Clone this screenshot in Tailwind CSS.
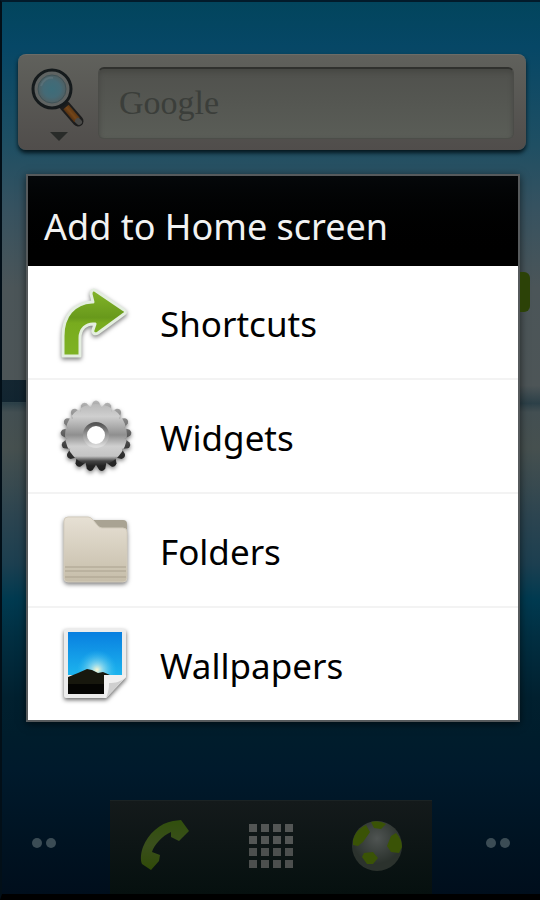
<!DOCTYPE html>
<html lang="en">
<head>
    <meta charset="UTF-8">
    <meta name="viewport" content="width=device-width, initial-scale=1.0">
    <title>Home</title>
    <script src="https://cdn.jsdelivr.net/npm/@tailwindcss/browser@4"></script>
</head>
<body class="bg-black font-['Noto_Sans',sans-serif]">
    <div class="min-h-screen flex flex-col justify-between border-t-2 border-l-2 border-b-6 border-t-[#021b2b] border-l-[#020f18] border-b-black bg-[linear-gradient(90deg,#0f222eee_0%,#0f222eee_8%,transparent_50%),linear-gradient(180deg,#02455d_0%,#064766_5%,#1f4f63_16%,#365260_23%,#4b5558_32%,#4d5557_43%,#2c4048_45%,#434f52_46%,#46504f_50%,#2b4450_58%,#1c3f50_63%,#003a50_67%,#012f42_71%,#01202f_78%,#001d2c_82%,#001a2c_86%,#001322_94%,#000e1c_100%)] bg-[length:100%_22px,100%_100%] bg-[position:0_378px,0_0] bg-no-repeat">

        <main class="flex flex-col">
            <!-- Search widget -->
            <form class="ml-4 mr-3.5 mt-13 h-24 flex items-center rounded-lg px-3 bg-linear-to-b from-[#60615c] to-[#504d4b] border-t border-[#6c6c67] shadow-[0_3px_4px_#04151c]">
                <button type="button" aria-label="Search options" class="w-14 shrink-0">
                    <svg class="w-14 h-20" viewBox="0 0 56 80" fill="none">
                        <defs>
                            <radialGradient id="lens"><stop offset="0" stop-color="#3c6d7a"/><stop offset=".6" stop-color="#446a76"/><stop offset="1" stop-color="#505f62"/></radialGradient>
                            <linearGradient id="handle" x1="0" y1="1" x2="1" y2="0"><stop offset="0" stop-color="#2a1608"/><stop offset=".5" stop-color="#74461a"/><stop offset="1" stop-color="#3c2209"/></linearGradient>
                        </defs>
                        <path d="M35 43l13 15" stroke="#1d1d1d" stroke-width="11" stroke-linecap="round"/>
                        <path d="M36 44l11 13" stroke="url(#handle)" stroke-width="7"/>
                        <path d="M48 58l1 1" stroke="#4a4a48" stroke-width="6" stroke-linecap="round"/>
                        <circle cx="22" cy="26" r="19" fill="#5f6362" stroke="#151a1c" stroke-width="3"/>
                        <circle cx="22" cy="26" r="14" fill="url(#lens)" stroke="#3f5257" stroke-width="1"/>
                        <path d="M11 23c2-6 7-9 12-8" stroke="#587078" stroke-width="2"/>
                        <path d="M20 69h18l-9 9z" fill="#292b29"/>
                    </svg>
                </button>
                <input type="text" aria-label="Google search" placeholder="Google" class="ml-3 min-w-0 flex-1 h-18 rounded-md px-5 text-[34px] font-['Liberation_Serif',serif] placeholder:text-[#3b3e3a] bg-linear-to-b from-[#50514d] to-[#5a5d57] border border-t-2 border-[#4b4c48] border-t-[#30312e] border-b-[#4c4e49] shadow-[inset_0_3px_5px_#464743]">
            </form>

            <!-- Dialog -->
            <section role="dialog" aria-labelledby="dialog-title" class="relative ml-6 mr-5 mt-6 border-2 border-[#565a5c] bg-white shadow-[0_2px_8px_#00000099]">
                <h1 id="dialog-title" class="h-[90px] pl-4 pt-3 flex items-center bg-linear-to-b from-[#05080a] to-black text-[36px] text-[#f2f2f2]">Add to Home screen</h1>
                <ul class="divide-y-2 divide-[#f3f3f3] text-[35px] text-black">
                    <li>
                        <button class="w-full h-28 flex items-center gap-6 pl-7">
                            <svg class="w-20 h-20 drop-shadow-[0_2px_2px_#00000080]" viewBox="0 0 80 80">
                                <defs><linearGradient id="arrow" x1="0" y1="0" x2="0" y2="1"><stop offset="0" stop-color="#83b52a"/><stop offset=".42" stop-color="#68991b"/><stop offset=".5" stop-color="#78ab1e"/><stop offset="1" stop-color="#7fb324"/></linearGradient></defs>
                                <path d="M7 74V54C7 34 18 21 36 20l1 0-2-8c0-4 3-5 5-3l28 19c2 1 2 3 0 4L42 51c-3 2-6 0-5-3l2-6c-9-1-15 5-15 14v18z" fill="url(#arrow)" stroke="#e4eee0" stroke-width="3" stroke-linejoin="round"/>
                            </svg>
                            <span class="pt-1">Shortcuts</span>
                        </button>
                    </li>
                    <li>
                        <button class="w-full h-28 flex items-center gap-6 pl-7">
                            <svg class="w-20 h-20 drop-shadow-[0_2px_2px_#00000080]" viewBox="0 0 80 80">
                                <defs>
                                    <linearGradient id="gear" x1="0" y1="0" x2="0" y2="1"><stop offset="0" stop-color="#b8b8b8"/><stop offset=".2" stop-color="#cfcfcf"/><stop offset=".5" stop-color="#8f8f8f"/><stop offset=".68" stop-color="#cfcfcf"/><stop offset=".84" stop-color="#c4c4c4"/><stop offset=".92" stop-color="#444"/><stop offset="1" stop-color="#222"/></linearGradient>
                                    <linearGradient id="rim" x1="0" y1="0" x2="0" y2="1"><stop offset="0" stop-color="#bbb"/><stop offset=".35" stop-color="#777"/><stop offset=".7" stop-color="#333"/><stop offset="1" stop-color="#1c1c1c"/></linearGradient>
                                    <linearGradient id="hub" x1="0" y1="0" x2="0" y2="1"><stop offset="0" stop-color="#555"/><stop offset="1" stop-color="#ddd"/></linearGradient>
                                    <path id="tooth" d="M33 16L37 6q3-3 6 0l4 10z" fill="#fff"/>
                                    <mask id="cog">
                                        <circle cx="40" cy="40" r="27" fill="#fff"/>
                                        <use href="#tooth"/>
                                        <use href="#tooth" transform="rotate(21.2 40 40)"/>
                                        <use href="#tooth" transform="rotate(42.4 40 40)"/>
                                        <use href="#tooth" transform="rotate(63.5 40 40)"/>
                                        <use href="#tooth" transform="rotate(84.7 40 40)"/>
                                        <use href="#tooth" transform="rotate(105.9 40 40)"/>
                                        <use href="#tooth" transform="rotate(127.1 40 40)"/>
                                        <use href="#tooth" transform="rotate(148.2 40 40)"/>
                                        <use href="#tooth" transform="rotate(169.4 40 40)"/>
                                        <use href="#tooth" transform="rotate(190.6 40 40)"/>
                                        <use href="#tooth" transform="rotate(211.8 40 40)"/>
                                        <use href="#tooth" transform="rotate(232.9 40 40)"/>
                                        <use href="#tooth" transform="rotate(254.1 40 40)"/>
                                        <use href="#tooth" transform="rotate(275.3 40 40)"/>
                                        <use href="#tooth" transform="rotate(296.5 40 40)"/>
                                        <use href="#tooth" transform="rotate(317.6 40 40)"/>
                                        <use href="#tooth" transform="rotate(338.8 40 40)"/>
                                    </mask>
                                </defs>
                                <g mask="url(#cog)">
                                    <circle cx="40" cy="40" r="37" fill="url(#rim)"/>
                                    <circle cx="40" cy="39" r="31" fill="url(#gear)"/>
                                </g>
                                <circle cx="40" cy="39" r="11" fill="#fff" stroke="url(#hub)" stroke-width="4"/>
                            </svg>
                            <span class="pt-1">Widgets</span>
                        </button>
                    </li>
                    <li>
                        <button class="w-full h-28 flex items-center gap-6 pl-7">
                            <svg class="w-20 h-20 drop-shadow-[0_2px_2px_#00000080]" viewBox="0 0 80 80">
                                <defs><linearGradient id="folder" x1="0" y1="0" x2="0" y2="1"><stop offset="0" stop-color="#e6e0d4"/><stop offset="1" stop-color="#c6bda9"/></linearGradient></defs>
                                <path d="M32 10h35q4 0 4 4v20H32z" fill="#a9a393"/>
                                <path d="M8 11q0-4 4-4h20q3 0 5 3l5 6q2 2 4 2h21q4 0 4 4v46q0 4-4 4H12q-4 0-4-4z" fill="url(#folder)" stroke="#d3ccbd"/>
                                <path d="M9 57h61M9 61h61M9 67h61" stroke="#aaa18e"/>
                            </svg>
                            <span class="pt-1">Folders</span>
                        </button>
                    </li>
                    <li>
                        <button class="w-full h-28 flex items-center gap-6 pl-7">
                            <svg class="w-20 h-20 drop-shadow-[0_2px_2px_#00000099]" viewBox="0 0 80 80">
                                <defs>
                                    <linearGradient id="sky" x1="0" y1="0" x2="0" y2="1"><stop offset="0" stop-color="#087fe0"/><stop offset="1" stop-color="#1db4ee"/></linearGradient>
                                    <radialGradient id="sun"><stop offset="0" stop-color="#fff8d0"/><stop offset=".3" stop-color="#b5e8ee" stop-opacity=".7"/><stop offset="1" stop-color="#35c4f4" stop-opacity="0"/></radialGradient>
                                </defs>
                                <path d="M8 7q0-2 2-2h58q2 0 2 2v46L50 74H10q-2 0-2-2z" fill="#ececec"/>
                                <path d="M12 8h54v43H12z" fill="url(#sky)"/>
                                <circle cx="41" cy="46" r="20" fill="url(#sun)"/>
                                <path d="M12 53l10-4 9-4 5 1 6 3 5-1 7 3v19H12z" fill="#17170d"/>
                                <path d="M12 60h36v10H12z" fill="#050503"/>
                                <path d="M48 51h22v2L50 74h-2z" fill="#f0f0f0"/>
                                <path d="M70 53L50 74c3-7 3-12 3-15 6 0 12-1 17-6z" fill="#cfcfcf"/>
                            </svg>
                            <span class="pt-1">Wallpapers</span>
                        </button>
                    </li>
                </ul>
                <!-- Edge of the widget behind the dialog -->
                <div class="absolute left-full top-24 ml-[2px] w-2.5 h-10 rounded-r-md bg-[#2c4207]"></div>
            </section>
        </main>

        <!-- Dock -->
        <nav class="flex items-stretch h-[94px]">
            <div class="flex-1 flex items-center justify-center gap-1 pr-5 pb-2"><i class="size-2.5 rounded-full bg-[#3b4c55]"></i><i class="size-2.5 rounded-full bg-[#3b4c55]"></i></div>
            <div class="w-[60%] ml-1 flex items-center justify-around pb-1 bg-linear-to-b from-[#141a1b] to-[#06100f] border-t border-[#1b2324]">
                <button aria-label="Phone">
                    <svg class="w-13 h-14" viewBox="0 0 52 56">
                        <defs><linearGradient id="phone" x1="0" y1="0" x2="0" y2="1"><stop offset="0" stop-color="#314f0d"/><stop offset=".5" stop-color="#3a4f1c"/><stop offset="1" stop-color="#304a08"/></linearGradient></defs>
                        <path d="M34 3l8-1 8 11-10 10-8-4 0-5C23 18 15 27 13 34l8 3-1 6-8 9-9-6C1 42 2 34 4 29 9 16 21 5 34 3z" fill="url(#phone)"/>
                    </svg>
                </button>
                <button aria-label="Applications" class="grid grid-cols-4 gap-1">
                    <i class="size-2 bg-[#535655]"></i><i class="size-2 bg-[#535655]"></i><i class="size-2 bg-[#535655]"></i><i class="size-2 bg-[#535655]"></i>
                    <i class="size-2 bg-[#535655]"></i><i class="size-2 bg-[#535655]"></i><i class="size-2 bg-[#535655]"></i><i class="size-2 bg-[#535655]"></i>
                    <i class="size-2 bg-[#4c4f4e]"></i><i class="size-2 bg-[#4c4f4e]"></i><i class="size-2 bg-[#4c4f4e]"></i><i class="size-2 bg-[#4c4f4e]"></i>
                    <i class="size-2 bg-[#4c4f4e]"></i><i class="size-2 bg-[#4c4f4e]"></i><i class="size-2 bg-[#4c4f4e]"></i><i class="size-2 bg-[#4c4f4e]"></i>
                </button>
                <button aria-label="Browser">
                    <svg class="w-13 h-13" viewBox="0 0 52 52">
                        <defs><radialGradient id="globe" cy=".35"><stop offset="0" stop-color="#4f5452"/><stop offset="1" stop-color="#2b322d"/></radialGradient></defs>
                        <circle cx="26" cy="26" r="25" fill="url(#globe)"/>
                        <path d="M2 20Q5 9 15 5l4 7-7 10-5 4-5-1zM20 2q8-2 15 2l-5 5-7-1zM40 16l5-3q6 6 6 14l-3 6-8-1-4-6zM13 33l9-1 5 6-5 6-6 0-5-7z" fill="#3a5306"/>
                    </svg>
                </button>
            </div>
            <div class="flex-1 flex items-center justify-center gap-1 pl-6 pb-2"><i class="size-2.5 rounded-full bg-[#3b4c55]"></i><i class="size-2.5 rounded-full bg-[#3b4c55]"></i></div>
        </nav>
    </div>
</body>
</html>
